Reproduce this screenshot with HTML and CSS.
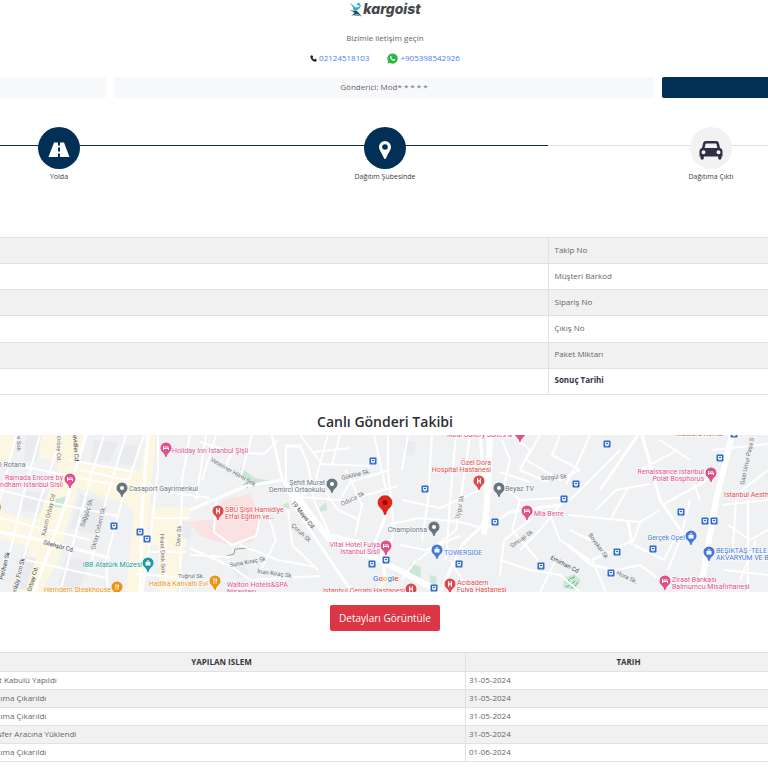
FILE: index.html
```
<!DOCTYPE html>
<html lang="tr">
<head>
<meta charset="utf-8">
<title>Kargoist</title>
<link rel="stylesheet" href="styles.css">
</head>
<body>
<header class="header">
  <a class="logo" href="#">
    <svg class="logo-mark" viewBox="0 0 14 16" aria-hidden="true">
      <path d="M.5 1.800 4.500 4.400 6.500 6.600 9.500 6 12.800 3.600 10.500 7.600 7 10 4 9.200 4.400 6.400z" fill="#22b5cf"/>
      <circle cx="9.600" cy="3.200" r="1.500" fill="#22b5cf"/>
      <path d="M.5 8.800 4.500 10 8 10 13 15.200 8.400 13 2.600 14.800 5.600 11.800z" fill="#3f444b"/>
      <path d="M4.500 14.800 8.600 13.200 12.800 15.600 9.500 15z" fill="#22b5cf"/>
    </svg>
    <span class="logo-name">kargoist</span>
  </a>
  <p class="contact-title">Bizimle iletişim geçin</p>
  <div class="contacts">
    <a class="contact" href="tel:02124518103">
      <svg class="phone-icon" viewBox="0 0 16 16" aria-hidden="true"><path d="M1.2 2.4 3.6.6c.6-.4 1.2-.3 1.6.3l1.9 2.7c.4.6.3 1.200-.2 1.600L5.600 6.300c.8 1.700 2.300 3.200 4.100 4.100l1.200-1.400c.4-.5 1-.6 1.600-.2l2.700 1.900c.5.4.6 1 .3 1.500l-1.800 2.500c-.4.5-1 .8-1.700.7C5.700 14.500 1.500 10.300.7 4.100c-.1-.7 0-1.300.5-1.700z" fill="#222"/></svg>
      <span>02124518103</span>
    </a>
    <a class="contact" href="#">
      <svg class="wa-icon" viewBox="0 0 22 22" aria-hidden="true"><path d="M11 .8a10.200 10.200 0 0 0-8.800 15.300L.8 21.200l5.300-1.400A10.200 10.200 0 1 0 11 .8z" fill="#2cb742"/><path d="M7.400 5.800c.5-.3 1-.2 1.200.3l.8 1.900c.2.400 0 .8-.8 1.600.8 1.600 2 2.800 3.700 3.500.9-1.100 1.200-1.400 1.700-1.200l2 1c.6.3.5.7.3 1.300-.5 1.200-1.700 1.800-3 1.600-3.700-.6-6.900-3.600-7.400-7.100-.1-1.200.5-2.300 1.500-2.900z" fill="#fff"/></svg>
      <span>+905398542926</span>
    </a>
  </div>
</header>

<main>
  <section class="strip">
    <div class="strip-cell"></div>
    <div class="strip-cell">Gönderici: Mod* * * * *</div>
    <div class="strip-cell strip-cell-active"></div>
  </section>

  <ol class="steps">
    <li class="step step-done">
      <span class="step-dot"><svg class="step-icon" viewBox="0 0 22 22" aria-hidden="true"><path fill-rule="evenodd" d="M6 3.500h4v3h2v-3h4L21.500 18H12v-3.500h-2V18H.5zM10 8.500v4h2v-4z" fill="#fff"/></svg></span>
      <span class="step-label">Yolda</span>
    </li>
    <li class="step step-done">
      <span class="step-dot"><svg class="step-icon" viewBox="0 0 22 22" aria-hidden="true"><path fill-rule="evenodd" d="M11 2a6 6 0 0 0-6 6c0 3 3.500 7 4.800 11 .4 1.200 2 1.200 2.400 0C13.500 15 17 11 17 8a6 6 0 0 0-6-6zm0 3.200a2.800 2.800 0 1 1 0 5.600 2.800 2.800 0 0 1 0-5.600z" fill="#fff"/></svg></span>
      <span class="step-label">Dağıtım Şubesinde</span>
    </li>
    <li class="step">
      <span class="step-dot"><svg class="step-icon step-icon-car" viewBox="0 0 24 20" aria-hidden="true"><path fill-rule="evenodd" d="M7 1h10c1.600 0 2.500.8 2.900 2.200L21 8c1.600.5 2.500 1.700 2.500 3.300v5.200h-1V18c0 2.200-3.300 2.200-3.300 0v-1.500H4.800V18c0 2.200-3.300 2.200-3.300 0v-1.500h-1v-5.200C.5 9.700 1.400 8.500 3 8l1.100-4.800C4.500 1.800 5.400 1 7 1zm.2 2.500c-.4 0-.6.2-.7.6L5.600 8h12.800l-.9-3.900c-.1-.4-.3-.6-.7-.6zM4.500 10.300a2 2 0 1 0 0 4 2 2 0 0 0 0-4zm15 0a2 2 0 1 0 0 4 2 2 0 0 0 0-4z" fill="#2b3142"/></svg></span>
      <span class="step-label">Dağıtıma Çıktı</span>
    </li>
  </ol>

  <table class="info">
    <tbody>
      <tr><td></td><td>Takip No</td></tr>
      <tr><td></td><td>Müşteri Barkod</td></tr>
      <tr><td></td><td>Sipariş No</td></tr>
      <tr><td></td><td>Çıkış No</td></tr>
      <tr><td></td><td>Paket Miktarı</td></tr>
      <tr><td></td><th scope="row">Sonuç Tarihi</th></tr>
    </tbody>
  </table>

  <section class="live">
    <h2 class="live-title">Canlı Gönderi Takibi</h2>
    <svg class="map" viewBox="0 435 768 157" preserveAspectRatio="xMidYMid slice">
      <defs>
        <path id="pin" d="M0-5.500a5.500 5.500 0 0 0-5.500 5.500C-5.500 4-1.200 4.500-.6 9h1.200C1.200 4.500 5.500 4 5.500 0A5.500 5.500 0 0 0 0-5.500z"/>
        <g id="bus"><rect x="-3.500" y="-3.500" width="7" height="7" rx="1" fill="#2f6bd0"/><path d="M-2-2H2V1.500H1V2.200H.3V1.500H-.3V2.200H-1V1.500H-2z" fill="#fff"/><path d="M-1.200-1.200H1.200V.2H-1.200z" fill="#2f6bd0"/></g>
        <g id="bed"><path d="M-3-2h1v2h5v2h-1V1h-4v1h-1zM-1.500-1.500H2.500L3-.5h-4.500z" fill="#fff"/></g>
        <g id="hosp"><path d="M-2-2.700h1.200v2h1.600v-2H2v5.400H.8v-2H-.8v2H-2z" fill="#fff"/></g>
        <g id="bag"><path fill-rule="evenodd" d="M-2.500-1h1c0-2.500 3-2.500 3 0h1v3.500h-5zM-.7-1H.7c0-1.200-1.400-1.200-1.400 0z" fill="#fff"/></g>
        <g id="fork"><path d="M-2-2.800h.6V0h.5v-2.800h.6V0h-.5v2.800h-.8V0H-2zM.6-2.800c2 0 1.700 3 .9 3.300v2.300H.6z" fill="#fff"/></g>
      </defs>
      <rect x="0" y="435" width="768" height="157" fill="#f0f1f3"/>

      <path class="map-warm" d="M38 435H86L80 462 140 470 148 435H156L150 500 144 592H126L134 512 126 504 78 488 66 530 58 562 40 592H16L30 548 0 538V512L38 520 54 478 60 462 40 458zM0 435H18L12 458 0 462zM151 507H190L186 545 180 570 176 592H160L158 545 149 545z"/>
      <path class="map-block" d="M26 435H42L36 462 24 460zM24 490 46 494 40 514 22 510zM80 494 106 502 94 534 70 528zM94 440 118 442 110 462 90 462zM24 555 36 558 26 590 12 588zM66 556 90 562 78 590 58 585zM182 520 192 522 190 540 182 536zM122 445H138L134 466 118 464zM230 566 244 564 250 574 238 578zM404 440 416 442 414 456 404 454z"/>
      <path class="map-pink" d="M190 522 216 519 222 500 250 494 262 520 252 542 226 544 200 536z"/>
      <path class="map-green" d="M240 467 255 478 272 481 258 485 244 479zM56 499 67 496 65 508 54 507zM318 509 326 502 327 510 320 512zM390 561 400 567 406 577 396 573zM411 563 421 567 420 580 408 574zM564 578 574 574 581 580 575 590 563 588zM430 575 437 577 436 585 430 583zM281 506 288 502 290 509z"/>
      <path class="map-tree" d="M567 582q3-5 8-5M566 587q5-1 9-6M571 588q4 0 7-6M243 486q2-4 5-2M246 488q3-1 4-4"/>
      <path d="M223 557 234 554 235 549 250 548" fill="none" stroke="#7fa98d" stroke-width="1"/>

      <g class="road road-small">
        <path d="M16 435 0 500M40 435 22 500 8 560M62 435 40 500 14 592M104 435 90 480 60 592M126 435 106 500 92 560M144 435 122 500 106 560 108 592"/>
        <path d="M0 462 60 474 122 486M0 490 48 502 118 516M70 460 134 472M80 470 128 480M0 518 90 540M26 560 106 578M152 518H190M148 552H186M136 574 190 578"/>
        <path d="M158 435V470L150 540 142 592M190 435 182 480 180 592M206 435 196 500M216 435 202 480M166 492 210 498M164 540 166 592"/>
        <path d="M200 442 232 452 264 454 278 440M232 452 224 470M252 435 240 480M286 445V490M288 446H300L308 464 314 500 330 535M300 435 322 464 370 466M328 435 316 478 338 510 360 520M340 435 332 464M314 452 350 448M320 480 300 497 340 500 350 482 390 470"/>
        <path d="M216 500 214 532 232 545 256 536 262 510M266 508 276 540 262 568M240 545 278 560 316 567M190 555 232 557M190 548 232 567 250 580 320 576M288 510 292 545 318 570M296 490 330 540 376 545M340 504 356 498 398 486M346 470 362 505 355 535M374 435 386 490"/>
        <path d="M388 435V470L394 530 386 560M408 435 402 470M432 435 428 500 422 540M456 435 450 500 446 560M470 435 462 490 456 530 418 560M390 524 420 518 460 522 482 528M402 500 440 508 480 490M400 545 426 550 460 536M416 560 402 580M450 560 470 592"/>
        <path d="M502 440 510 460 504 486 520 500 560 498M512 435 530 450 520 470 548 482M540 435 526 460 560 480 580 470M500 472 530 482M560 435 552 455 580 470M520 500 512 530 538 560M530 520 504 540 500 575M548 510 560 540 590 560M564 500 540 530 520 550M500 560 530 570 560 575 580 592M556 560 540 592"/>
        <path d="M590 435 578 462 566 484M620 450 600 470 570 500M596 510 616 490 650 484M568 515 640 522 660 510M628 488 610 520M660 440 690 460M678 450 640 470M694 484 700 500M664 504 704 482 712 470M640 522 634 540 592 560M570 530 600 545M634 545 664 560 674 540 690 530M690 500 680 540 668 570M592 560 606 592M606 572 640 565 660 580"/>
        <path d="M732 435 726 460M722 505 768 500M728 525 750 540 768 530M736 500 732 560M768 470 740 492M724 570 768 575M748 500V592M756 540 740 580M712 450 768 444"/>
      </g>
      <g class="road road-mid">
        <path d="M86 435 66 502 34 592M0 532 40 540 110 558M148 435 142 510 140 592M272 435 282 478 300 515 330 560 352 592M190 510 246 486 282 480M285 446H302M386 515 374 545 330 535M480 435 488 520 462 545 440 592M486 528 510 512 560 505M642 435 660 500 684 535M568 545 592 565 612 570M628 520 632 545M638 435 600 490M380 545 386 580 376 592"/>
      </g>
      <g class="road road-main">
        <path d="M286 484 330 540 380 560 440 592M490 435 488 490 484 535M732 435 716 500 700 592"/>
      </g>

      <g class="street">
        <text transform="translate(17 436) rotate(90)">e Sok.</text>
        <text transform="translate(57 436) rotate(90)">Orbay Cd.</text>
        <text transform="translate(73 435) rotate(86)" class="street-dark">avidler Cd.</text>
        <text transform="translate(45 536) rotate(-76)">Kazım Orbay Cd</text>
        <text transform="translate(84 527) rotate(-72)">Sağgöç Sk.</text>
        <text transform="translate(95 550) rotate(-76)">Oktay Cebeci Sk.</text>
        <text transform="translate(43 544) rotate(15)" class="street-dark">Silahşör Cd.</text>
        <text transform="translate(3 580) rotate(-76)" class="street-dark">Perihan Sk</text>
        <text transform="translate(15 598) rotate(-76)" class="street-dark">Feriköy Fırın Sk</text>
        <text transform="translate(31 592) rotate(-74)" class="street-dark">Orbay Cd.</text>
        <text transform="translate(160 534) rotate(88)">Hrant Dink Sok.</text>
        <text transform="translate(180 546) rotate(-86)">Dere Sk</text>
        <text x="178" y="578">Tuğrul Sk.</text>
        <text transform="translate(210 461) rotate(30)">Veteriner Hilmi Sok</text>
        <text transform="translate(291 503) rotate(51)" class="street-dark">19 Mayıs Cd.</text>
        <text transform="translate(291 526) rotate(43)">Çoruh Sk</text>
        <text transform="translate(342 480) rotate(-14)">Gökline Sk.</text>
        <text transform="translate(342 506) rotate(-26)">Oduca Sk</text>
        <text transform="translate(230 567) rotate(-10)">Suna Kıraç Sk</text>
        <text transform="translate(257 573) rotate(8)">İnan Kıraç Sk.</text>
        <text transform="translate(459 519) rotate(-78)">Uygur Sk</text>
        <text transform="translate(541 480) rotate(-4)">Sezgül Sk</text>
        <text transform="translate(512 548) rotate(-35)">Sinoaji Sk</text>
        <text transform="translate(550 559) rotate(27)" class="street-dark">Emirhan Cd</text>
        <text transform="translate(588 535) rotate(54)">Boyakar Sk</text>
        <text transform="translate(616 574) rotate(26)">Hora Sk.</text>
        <text transform="translate(744 485) rotate(-78)">Gazi Umur Paşa S</text>
      </g>

      <g class="poi pink">
        <use href="#pin" x="166" y="448"/><use href="#bed" x="166" y="448"/><text x="172" y="453">Holiday Inn Istanbul Şişli</text>
        <use href="#pin" x="70" y="479"/><use href="#bed" x="70" y="479"/><text x="63" y="480" class="end">Ramada Encore by</text><text x="63" y="487" class="end">Wyndham Istanbul Sisli</text>
        <use href="#pin" x="386" y="546"/><use href="#bed" x="386" y="546"/><text x="380" y="547" class="end">Vital Hotel Fulya</text><text x="380" y="554" class="end">Istanbul Sisli</text>
        <use href="#pin" x="527" y="511"/><use href="#bed" x="527" y="511"/><text x="534" y="516">Mia Berre</text>
        <use href="#pin" x="711" y="473"/><use href="#bed" x="711" y="473"/><text x="704" y="474" class="end">Renaissance Istanbul</text><text x="704" y="481" class="end">Polat Bosphorus</text>
        <use href="#pin" x="665" y="581"/><use href="#bed" x="665" y="581"/><text x="672" y="582">Ziraat Bankası</text><text x="672" y="589">Balmumcu Misafirhanesi</text>
        <text x="227" y="587">Walton Hotels&amp;SPA</text><text x="227" y="594">Nişantaşı</text>
        <use href="#pin" x="520" y="433"/><text x="447" y="437">Ikbal Gallery Suites &amp;</text>
      </g>
      <g class="poi red">
        <use href="#pin" x="218" y="511"/><use href="#hosp" x="218" y="511"/><text x="225" y="512">SBÜ Şişli Hamidiye</text><text x="225" y="519">Etfal Eğitim ve…</text>
        <use href="#pin" x="479" y="481"/><use href="#hosp" x="479" y="481"/><text x="491" y="465" class="end">Özel Dora</text><text x="491" y="472" class="end">Hospital Hastanesi</text>
        <use href="#pin" x="450" y="584"/><use href="#hosp" x="450" y="584"/><text x="457" y="585">Acıbadem</text><text x="457" y="592">Fulya Hastanesi</text>
        <use href="#pin" x="411" y="589"/><use href="#hosp" x="411" y="589"/><text x="405" y="593" class="end">Istanbul Cerrahi Hastanesi</text>
        <text x="724" y="497">Istanbul Aesthetic</text>
        <text x="676" y="436">Mustafa Kemal</text>
      </g>
      <g class="poi grey">
        <use href="#pin" x="122" y="488"/><circle cx="122" cy="488" r="2" fill="#fff"/><text x="129" y="491">Casaport Gayrimenkul</text>
        <use href="#pin" x="332" y="484"/><circle cx="332" cy="484" r="2" fill="#fff"/><text x="325" y="485" class="end">Şehit Murat</text><text x="325" y="492" class="end">Demirci Ortaokulu</text>
        <use href="#pin" x="499" y="488"/><circle cx="499" cy="488" r="2" fill="#fff"/><text x="505" y="491">Beyaz TV</text>
        <use href="#pin" x="434" y="527"/><circle cx="434" cy="527" r="2" fill="#fff"/><text x="427" y="532" class="end">Championsa</text>
        <text x="0" y="467">l Rotana</text>
      </g>
      <g class="poi blue">
        <use href="#pin" x="437" y="550"/><use href="#bag" x="437" y="550"/><text x="444" y="555">TOWERSIDE</text>
        <use href="#pin" x="691" y="536"/><use href="#bag" x="691" y="536"/><text x="685" y="540" class="end">Gerçek Opel</text>
        <use href="#pin" x="709" y="552"/><use href="#bag" x="709" y="552"/><text x="716" y="553">BEŞİKTAŞ -TELE</text><text x="716" y="560">AKVARYUM VE B</text>
      </g>
      <g class="poi teal"><use href="#pin" x="148" y="563"/><use href="#bag" x="148" y="563"/><text x="142" y="567" class="end">IBB Atatürk Müzesi</text></g>
      <g class="poi amber">
        <use href="#pin" x="215" y="581"/><use href="#fork" x="215" y="581"/><text x="208" y="586" class="end">Hadika Kahvaltı Evi</text>
        <use href="#pin" x="117" y="587"/><use href="#fork" x="117" y="587"/><text x="111" y="592" class="end">Hemdem Steakhouse</text>
        <circle cx="-4" cy="507" r="5"/>
      </g>

      <use href="#bus" x="114" y="526"/><use href="#bus" x="140" y="532"/><use href="#bus" x="147" y="539"/>
      <use href="#bus" x="373" y="461"/><use href="#bus" x="425" y="489"/><use href="#bus" x="495" y="522"/>
      <use href="#bus" x="459" y="564"/><use href="#bus" x="372" y="564"/><use href="#bus" x="386" y="560"/>
      <use href="#bus" x="434" y="588"/><use href="#bus" x="541" y="566"/><use href="#bus" x="564" y="499"/>
      <use href="#bus" x="576" y="484"/><use href="#bus" x="607" y="444"/><use href="#bus" x="720" y="458"/>
      <use href="#bus" x="681" y="512"/><use href="#bus" x="705" y="521"/><use href="#bus" x="714" y="521"/>
      <use href="#bus" x="617" y="552"/><use href="#bus" x="653" y="549"/><use href="#bus" x="611" y="573"/><use href="#bus" x="734" y="434"/>

      <path d="M385 495.500a7 7 0 0 0-7 7c0 5 5.500 6 6.300 12h1.400c.8-6 6.300-7 6.300-12a7 7 0 0 0-7-7z" fill="#e6231b" stroke="#b81811" stroke-width=".6"/>
      <circle cx="385" cy="502.500" r="2.500" fill="#8d0f0b"/>
      <text class="google" x="373" y="581"><tspan fill="#4285f4">G</tspan><tspan fill="#ea4335">o</tspan><tspan fill="#fbbc05">o</tspan><tspan fill="#4285f4">g</tspan><tspan fill="#34a853">l</tspan><tspan fill="#ea4335">e</tspan></text>
    </svg>
    <button class="details" type="button">Detayları Görüntüle</button>
  </section>

  <div class="history-wrap">
    <table class="history">
      <thead><tr><th class="col-action" scope="col">YAPILAN ISLEM</th><th scope="col">TARIH</th></tr></thead>
      <tbody>
        <tr><td>Paket Kabulü Yapıldı</td><td>31-05-2024</td></tr>
        <tr><td>Dağıtıma Çıkarıldı</td><td>31-05-2024</td></tr>
        <tr><td>Dağıtıma Çıkarıldı</td><td>31-05-2024</td></tr>
        <tr><td>Transfer Aracına Yüklendi</td><td>31-05-2024</td></tr>
        <tr><td>Dağıtıma Çıkarıldı</td><td>01-06-2024</td></tr>
      </tbody>
    </table>
  </div>
</main>
</body>
</html>
```
FILE: styles.css
```
* { box-sizing: border-box; }

body {
  margin: 0;
  overflow-x: hidden;
  background: #fff;
  color: #63666b;
  font: 8px/12px "Open Sans", "Noto Sans", sans-serif;
}

a { text-decoration: none; }

.header {
  display: flex;
  flex-direction: column;
  align-items: center;
  padding-left: 2px;
}

.logo {
  display: flex;
  align-items: center;
  color: #44474c;
}

.logo-mark { width: 14px; height: 16px; }

.logo-name {
  font: italic 800 14px/18px Inter, sans-serif;
}

.contact-title { margin: 14px 0 8px; }

.contacts { display: flex; gap: 18px; }

.contact {
  display: flex;
  align-items: center;
  gap: 2px;
  color: #4c7df0;
}

.phone-icon { width: 7px; height: 7px; }
.wa-icon { width: 11px; height: 11px; }

.strip {
  display: grid;
  grid-template-columns: 1fr 540px 1fr;
  gap: 8px;
  margin-top: 13px;
}

.strip-cell {
  min-height: 21px;
  padding: 4px 0 5px;
  background: #f8f9fb;
  text-align: center;
}

.strip-cell-active {
  background: #022f56;
  border-radius: 2px 0 0 2px;
}

.steps {
  display: grid;
  grid-template-columns: repeat(3, 326px);
  justify-content: center;
  margin: 29px 0 0;
  padding: 0 0 0 2px;
  list-style: none;
  overflow: hidden;
}

.step {
  position: relative;
  display: flex;
  flex-direction: column;
  align-items: center;
  gap: 2px;
  color: #3d4046;
  font-size: 7px;
}

.step::before {
  content: "";
  position: absolute;
  top: 18px;
  left: 0;
  right: 0;
  height: 1px;
  background: #dcdee0;
}

.step-done::before { background: #0b2f52; }

.step-dot {
  position: relative;
  display: grid;
  place-items: center;
  width: 42px;
  height: 42px;
  padding-top: 4px;
  border-radius: 50%;
  background: #f2f2f3;
}

.step-done .step-dot { background: #022f56; }

.step-icon { width: 22px; height: 22px; }
.step-icon-car { width: 24px; height: 20px; }

table { border-collapse: collapse; table-layout: fixed; }

.info {
  width: 100%;
  height: 158px;
  margin-top: 54px;
}

.info tr, .history tr { border: solid #dfe1e3; border-width: 1px 0; }
.info tr:nth-child(odd) { background: #f1f1f2; }

.info td, .info th {
  padding: 0 6px 2px;
  text-align: left;
}

.info td:last-child, .info th { width: 220px; border-left: 1px solid #dfe1e3; }
.info th { color: #2f3440; }

.live {
  display: flex;
  flex-direction: column;
  align-items: center;
}

.live-title {
  margin: 18px 0 4px;
  padding-left: 2px;
  color: #2b2f35;
  font-size: 14px;
  font-weight: 600;
  line-height: 18px;
}

.map { display: block; width: 100%; height: 157px; }

.map-warm { fill: #fcf7e2; }
.map-block { fill: #e9ebef; }
.map-pink { fill: #fbe2e2; }
.map-green { fill: #cde7d6; }
.map-tree { fill: none; stroke: #58b87a; stroke-width: 1; }
.road { fill: none; stroke: #fff; stroke-linejoin: round; }
.road-small { stroke-width: 2; }
.road-mid { stroke-width: 3; }
.road-main { stroke-width: 6; }

.street { fill: #6d7176; font: 6px Roboto, sans-serif; }
.street-dark { fill: #3f4246; }

.poi { font: 7px Roboto, sans-serif; }
.poi text { paint-order: stroke; stroke: #fff; stroke-width: 1px; }
.end { text-anchor: end; }
.pink { fill: #e0508a; }
.red { fill: #dc4a4c; }
.grey { fill: #68767f; }
.blue { fill: #4579d6; }
.teal { fill: #169aa5; }
.amber { fill: #ec9412; }
.google { font: 500 8px Roboto, sans-serif; paint-order: stroke; stroke: #fff; stroke-width: 1px; }

.details {
  margin: 13px 0 0 2px;
  padding: 5px 9px;
  border: 0;
  border-radius: 2px;
  background: #dc3545;
  color: #fff;
  font: 10px/16px "Open Sans", sans-serif;
}

.history-wrap {
  display: flex;
  justify-content: center;
  overflow: hidden;
  margin-top: 21px;
}

.history {
  flex: none;
  width: 814px;
}

.history th, .history td { height: 19px; padding: 0 3px 1px; border-left: 1px solid #dfe1e3; }
.history th { color: #34373c; }
.history tbody td { height: 18px; }
.col-action { width: 488px; }
.history thead tr, .history tbody tr:nth-child(even) { background: #f1f1f2; }
```
